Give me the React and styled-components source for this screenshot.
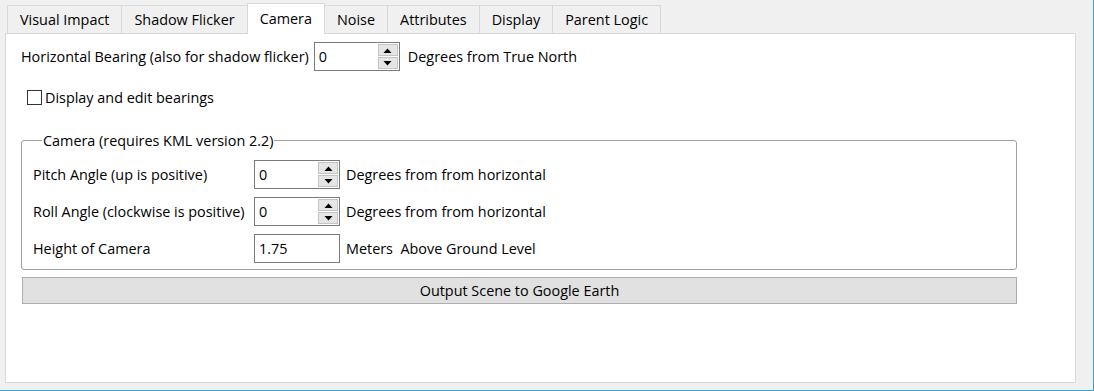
import React from 'react';
import styled, { createGlobalStyle } from 'styled-components';

const GlobalStyle = createGlobalStyle`
  html, body {
    margin: 0;
    padding: 0;
    background: #f0f0f0;
  }
  * { box-sizing: border-box; }
`;

const tabs = [
  'Visual Impact',
  'Shadow Flicker',
  'Camera',
  'Noise',
  'Attributes',
  'Display',
  'Parent Logic',
];

const Window = styled.div({
  width: 1094,
  height: 391,
  background: '#f0f0f0',
  borderRight: '1px solid #3ba3d3',
  borderBottom: '1px solid #3ba3d3',
  padding: '3px 0 0 5px',
  fontFamily: '"Open Sans", "Liberation Sans", sans-serif',
  fontSize: 14.4,
  color: '#000',
});

const TabBar = styled.div({
  display: 'flex',
  alignItems: 'flex-end',
  paddingLeft: 2,
  height: 31,
  position: 'relative',
  zIndex: 1,
});

const Tab = styled.div(({ $active }) => ({
  height: $active ? 31 : 29,
  padding: '0 12px',
  display: 'flex',
  alignItems: 'center',
  paddingBottom: $active ? 2 : 0,
  background: $active ? '#fff' : '#f0f0f0',
  border: '1px solid #d9d9d9',
  borderBottom: $active ? 'none' : '1px solid #d9d9d9',
  marginLeft: -1,
  whiteSpace: 'nowrap',
  '&:first-child': { marginLeft: 0 },
}));

const Pane = styled.div({
  width: 1071,
  height: 350,
  marginTop: -1,
  background: '#fff',
  border: '1px solid #d9d9d9',
  padding: '8px 15px 0 15px',
});

const Row = styled.div({
  display: 'flex',
  alignItems: 'center',
});

const Gap = styled.span(({ $w }) => ({
  display: 'inline-block',
  width: $w,
}));

const SpinWrap = styled.div({
  width: 86,
  height: 29,
  border: '1px solid #7a7a7a',
  display: 'flex',
  alignItems: 'center',
  paddingLeft: 4,
  background: '#fff',
});

const SpinValue = styled.span({
  flex: 1,
});

const SpinButtons = styled.div({
  width: 21,
  height: 27,
  display: 'flex',
  flexDirection: 'column',
  gap: 1,
  padding: '1px 1px 1px 0',
});

const SpinBtn = styled.div({
  flex: 1,
  background: '#e5e5e5',
  border: '1px solid #c4c4c4',
  display: 'flex',
  alignItems: 'center',
  justifyContent: 'center',
});

const Arrow = ({ down }) => (
  <svg width="9" height="5" viewBox="0 0 9 5">
    <path d={down ? 'M0.5 0 L8.5 0 L4.5 4.5 Z' : 'M0.5 5 L8.5 5 L4.5 0.5 Z'} fill="#000" />
  </svg>
);

const SpinBox = ({ value }) => (
  <SpinWrap>
    <SpinValue>{value}</SpinValue>
    <SpinButtons>
      <SpinBtn><Arrow /></SpinBtn>
      <SpinBtn><Arrow down /></SpinBtn>
    </SpinButtons>
  </SpinWrap>
);

const CheckRow = styled.label({
  display: 'flex',
  alignItems: 'center',
  gap: 3,
  marginTop: 17,
  marginLeft: 6,
});

const CheckBox = styled.span({
  width: 15,
  height: 15,
  border: '1px solid #333',
  background: '#fff',
});

const Group = styled.fieldset({
  margin: '24px 0 0 0',
  width: 996,
  height: 139,
  border: '1px solid #a0a0a0',
  borderRadius: 3,
  padding: '10px 0 0 11px',
});

const Legend = styled.legend({
  marginLeft: 9,
  padding: '0 1px',
});

const GroupGrid = styled.div({
  display: 'grid',
  gridTemplateColumns: '215px 86px auto',
  columnGap: 6,
  rowGap: 8,
  alignItems: 'center',
});

const TextBox = styled.div({
  width: 86,
  height: 29,
  border: '1px solid #7a7a7a',
  paddingLeft: 4,
  display: 'flex',
  alignItems: 'center',
});

const Button = styled.div({
  marginTop: 7,
  marginLeft: 1,
  width: 995,
  height: 27,
  background: '#e1e1e1',
  border: '1px solid #adadad',
  display: 'flex',
  alignItems: 'center',
  justifyContent: 'center',
});

export default function App() {
  return (
    <>
      <GlobalStyle />
      <Window>
        <TabBar>
          {tabs.map((t) => (
            <Tab key={t} $active={t === 'Camera'}>{t}</Tab>
          ))}
        </TabBar>
        <Pane>
          <Row>
            <span>Horizontal Bearing (also for shadow flicker)</span>
            <Gap $w={5} />
            <SpinBox value="0" />
            <Gap $w={8} />
            <span>Degrees from True North</span>
          </Row>
          <CheckRow>
            <CheckBox />
            <span>Display and edit bearings</span>
          </CheckRow>
          <Group>
            <Legend>Camera (requires KML version 2.2)</Legend>
            <GroupGrid>
              <span>Pitch Angle (up is positive)</span>
              <SpinBox value="0" />
              <span>Degrees from from horizontal</span>
              <span>Roll Angle (clockwise is positive)</span>
              <SpinBox value="0" />
              <span>Degrees from from horizontal</span>
              <span>Height of Camera</span>
              <TextBox>1.75</TextBox>
              <span>Meters&nbsp; Above Ground Level</span>
            </GroupGrid>
          </Group>
          <Button>Output Scene to Google Earth</Button>
        </Pane>
      </Window>
    </>
  );
}
